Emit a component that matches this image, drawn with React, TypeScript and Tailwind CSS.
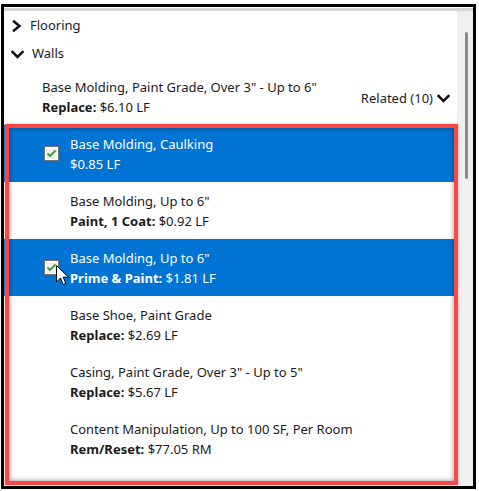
import React from 'react'

type Item = {
  title: string
  label?: string
  price: string
  checked?: boolean
  cursor?: boolean
}

const items: Item[] = [
  { title: 'Base Molding, Caulking', price: '$0.85 LF', checked: true },
  { title: 'Base Molding, Up to 6"', label: 'Paint, 1 Coat:', price: '$0.92 LF' },
  { title: 'Base Molding, Up to 6"', label: 'Prime & Paint:', price: '$1.81 LF', checked: true, cursor: true },
  { title: 'Base Shoe, Paint Grade', label: 'Replace:', price: '$2.69 LF' },
  { title: 'Casing, Paint Grade, Over 3" - Up to 5"', label: 'Replace:', price: '$5.67 LF' },
  { title: 'Content Manipulation, Up to 100 SF, Per Room', label: 'Rem/Reset:', price: '$77.05 RM' },
]

const ChevronRight = () => (
  <svg width="10" height="12" viewBox="0 0 10 12" fill="none">
    <polyline points="2,1.5 7.5,6 2,10.5" stroke="#111" strokeWidth="2.5" strokeLinecap="square" />
  </svg>
)

const ChevronDown = () => (
  <svg width="13" height="9" viewBox="0 0 13 9" fill="none">
    <polyline points="1.5,2 6.5,7 11.5,2" stroke="#111" strokeWidth="2.5" strokeLinecap="square" />
  </svg>
)

const Checkbox = () => (
  <div className="w-[15px] h-[15px] shrink-0 border border-[#707070] bg-[#efefef] shadow-[inset_0_0_0_1px_#ffffff] flex items-center justify-center">
    <svg width="11" height="9" viewBox="0 0 11 9" fill="none">
      <polyline points="1.5,4.5 4,7 9.5,1.5" stroke="#3a9a3a" strokeWidth="1.8" />
    </svg>
  </div>
)

const Cursor = () => (
  <svg width="14" height="21" viewBox="0 0 14 21" className="absolute left-[52px] top-[26px]">
    <path d="M0.5 0.5 L0.5 17 L4.5 13 L7.2 19.5 L9.8 18.4 L7.2 12.2 L12.5 12.2 Z" fill="#fff" stroke="#000" strokeWidth="1" strokeLinejoin="miter" />
  </svg>
)

export default function App() {
  return (
    <div className="bg-white w-[479px] h-[491px] pt-[4px] pl-[1px]" style={{ fontFamily: '"Noto Sans", sans-serif' }}>
      <div className="w-[475px] h-[485px] border-[3px] border-black relative flex flex-col text-[13px] text-[#1b1b1b]">
        <div className="h-[1px] bg-white" />
        <div className="h-[3px] bg-[#d6d6d6]" />
        <div className="flex flex-1 min-h-0">
          <div className="flex-1 flex flex-col">
            <div className="h-[29px] flex items-center pl-[8px] gap-[8px] pt-[1px]">
              <ChevronRight />
              <span>Flooring</span>
            </div>
            <div className="h-[28px] flex items-center pl-[7px] gap-[8px]">
              <ChevronDown />
              <span>Walls</span>
            </div>
            <div className="h-[57px] flex pl-[38px] pr-[7px] pt-[9px] leading-[20px]">
              <div className="flex-1">
                <div>Base Molding, Paint Grade, Over 3" - Up to 6"</div>
                <div>
                  <span className="font-bold">Replace:</span> $6.10 LF
                </div>
              </div>
              <div className="flex items-center gap-[4px] self-start mt-[11px]">
                <span>Related (10)</span>
                <ChevronDown />
              </div>
            </div>
            {items.map((it, i) => (
              <div
                key={i}
                className={`h-[57px] relative flex items-center leading-[20px] ${
                  it.checked ? 'bg-[#0074d4] text-white' : 'bg-white'
                } ${it.checked ? 'pl-[40px] gap-[11px]' : 'pl-[66px]'}`}
              >
                {it.checked && <Checkbox />}
                <div className="self-start pt-[9px]">
                  <div>{it.title}</div>
                  <div>
                    {it.label && <span className="font-bold">{it.label}</span>} {it.price}
                  </div>
                </div>
                {it.cursor && <Cursor />}
              </div>
            ))}
          </div>
          <div className="w-[16px] bg-[#f0f0f0] flex justify-center pl-[2px]">
            <div className="w-[3px] h-[147px] mt-[21px] rounded-full bg-[#8a8a8a]" />
          </div>
        </div>
        <div className="absolute left-[1px] top-[117px] w-[453px] h-[361px] border-[4px] border-[#fd4646] shadow-[inset_0_0_5px_rgba(0,0,0,0.45),0_0_2px_rgba(255,90,90,0.6)]" />
      </div>
    </div>
  )
}
